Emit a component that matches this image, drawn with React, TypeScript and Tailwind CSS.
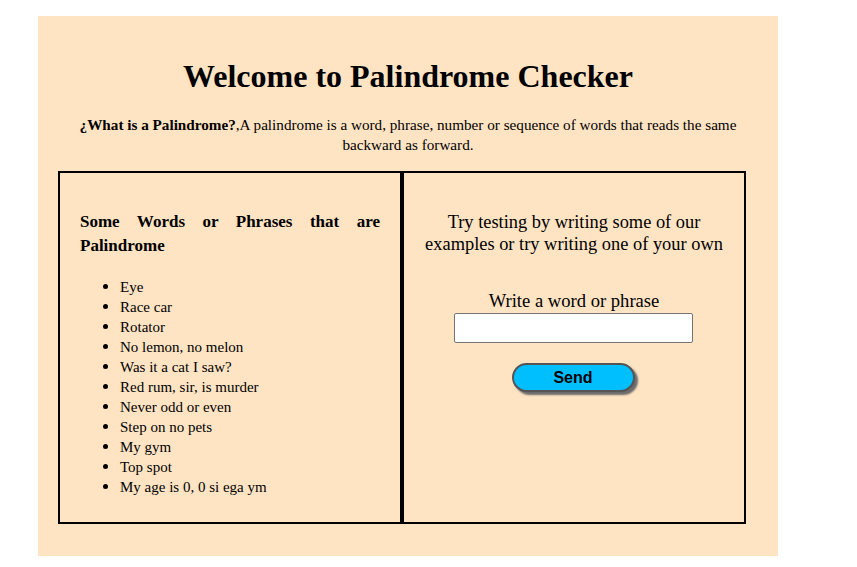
const palindromes = [
	"Eye",
	"Race car",
	"Rotator",
	"No lemon, no melon",
	"Was it a cat I saw?",
	"Red rum, sir, is murder",
	"Never odd or even",
	"Step on no pets",
	"My gym",
	"Top spot",
	"My age is 0, 0 si ega ym",
];

const serif = "font-['Liberation_Serif','Times_New_Roman',serif]";

export default function App() {
	return (
		<div className={`${serif} min-h-[567px] w-full bg-white pt-[16px] text-black`}>
			<main className="ml-[38px] flex h-[540px] w-[740px] flex-col bg-[#ffe4c4] pt-[40px]">
				<h1 className="text-center text-[32px] leading-[40px] font-bold">
					Welcome to Palindrome Checker
				</h1>

				<p className="mt-[19px] px-[36px] text-center text-[15.2px] leading-[20px]">
					<b>¿What is a Palindrome?</b>,A palindrome is a word, phrase, number or
					sequence of words that reads the same backward as forward.
				</p>

				<div className="mt-[16px] ml-[20px] flex h-[353px]">
					<section className="w-[344px] border-2 border-black px-[20px] pt-[37px]">
						<h2 className="text-justify text-[17px] leading-[24px] font-bold [text-align-last:left]">
							Some Words or Phrases that are Palindrome
						</h2>
						<ul className="mt-[19px] list-disc pl-[40px] text-[15px] leading-[20px] marker:text-[17px]">
							{palindromes.map((word) => (
								<li key={word}>{word}</li>
							))}
						</ul>
					</section>

					<section className="flex w-[344px] flex-col items-center border-2 border-black px-[16px] pt-[38px]">
						<p className="text-center text-[18.4px] leading-[22px]">
							Try testing by writing some of our
							<br />
							examples or try writing one of your own
						</p>

						<label
							htmlFor="word"
							className="mt-[35px] text-center text-[18.6px] leading-[22px]"
						>
							Write a word or phrase
						</label>
						<input
							id="word"
							type="text"
							className="mt-[1px] mr-[2px] h-[30px] w-[239px] rounded-[2px] border border-[#767676] bg-white px-2 outline-none"
						/>

						<button
							type="button"
							className="mt-[20px] mr-[2px] h-[29px] w-[123px] rounded-full border-2 border-[#555555] bg-[#00bfff] font-['Liberation_Sans',Arial,sans-serif] text-[16px] leading-none font-bold shadow-[3px_3px_2px_#6b6b6b]"
						>
							Send
						</button>
					</section>
				</div>
			</main>
		</div>
	);
}
